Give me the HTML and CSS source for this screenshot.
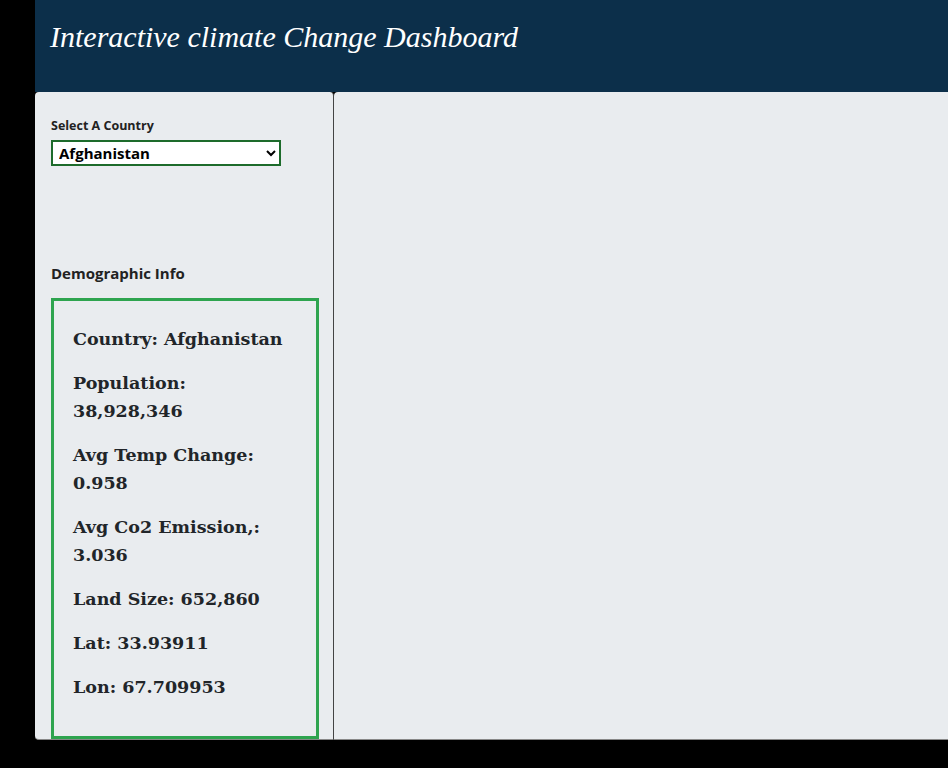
FILE: index.html
```html
<!DOCTYPE html>
<html>
<head>
<meta charset="utf-8">
<title>Interactive climate Change Dashboard</title>
<link rel="stylesheet" href="styles.css">
</head>
<body>
<div class="page">
  <header class="header">
    <h1 class="title">Interactive climate Change Dashboard</h1>
  </header>
  <div class="content">
    <aside class="sidebar">
      <label class="label" for="country">Select A Country</label>
      <div class="select-wrap">
        <select id="country" class="select">
          <option>Afghanistan</option>
        </select>
      </div>
      <h3 class="section-title">Demographic Info</h3>
      <div class="info">
        <p>Country: Afghanistan</p>
        <p>Population: 38,928,346</p>
        <p>Avg Temp Change: 0.958</p>
        <p>Avg Co2 Emission,: 3.036</p>
        <p>Land Size: 652,860</p>
        <p>Lat: 33.93911</p>
        <p>Lon: 67.709953</p>
      </div>
    </aside>
    <main class="main"></main>
  </div>
</div>
</body>
</html>
```

FILE: styles.css
```css
html, body {
  margin: 0;
  padding: 0;
  background: #000;
  height: 100%;
}
.page {
  margin-left: 35px;
  display: flex;
  flex-direction: column;
}
.header {
  background: #0c2f4a;
  height: 92px;
  display: flex;
  align-items: flex-start;
}
.title {
  margin: 19px 0 0 15px;
  font-family: "Liberation Serif", serif;
  font-style: italic;
  font-weight: normal;
  font-size: 30px;
  line-height: 36px;
  color: #fff;
}
.content {
  display: flex;
  height: 648px;
}
.sidebar {
  width: 299px;
  flex: none;
  box-sizing: border-box;
  background: #e9ecef;
  padding: 0 14px 0 16px;
  border-right: 1px solid #444;
  border-bottom: 1px solid #888;
  border-radius: 4px 4px 0 4px;
  display: flex;
  flex-direction: column;
  overflow: hidden;
}
.label {
  display: block;
  margin-top: 26px;
  font-family: "Open Sans", sans-serif;
  font-weight: bold;
  font-size: 12.5px;
  line-height: 16px;
  color: #222;
}
.select-wrap {
  margin-top: 6px;
}
.select {
  width: 230px;
  height: 26px;
  border: 2px solid #1d6b2b;
  background: #fff;
  font-family: "Open Sans", sans-serif;
  font-weight: bold;
  font-size: 15px;
  color: #000;
  padding: 0 2px;
  border-radius: 0;
}
.section-title {
  margin: 97px 0 0;
  font-family: "Open Sans", sans-serif;
  font-weight: bold;
  font-size: 15px;
  line-height: 20px;
  color: #222;
}
.info {
  margin-top: 15px;
  width: 268px;
  border: 3px solid #2ea44f;
  padding: 8px 19px 19px;
  box-sizing: border-box;
  flex: 1;
}
.info p {
  margin: 16px 0;
  font-family: "DejaVu Serif", serif;
  font-weight: bold;
  font-size: 17.5px;
  line-height: 28px;
  color: #212529;
}
.main {
  flex: 1;
  background: #e9ecef;
  border-bottom: 1px solid #888;
  border-radius: 4px 0 0 0;
}
```
